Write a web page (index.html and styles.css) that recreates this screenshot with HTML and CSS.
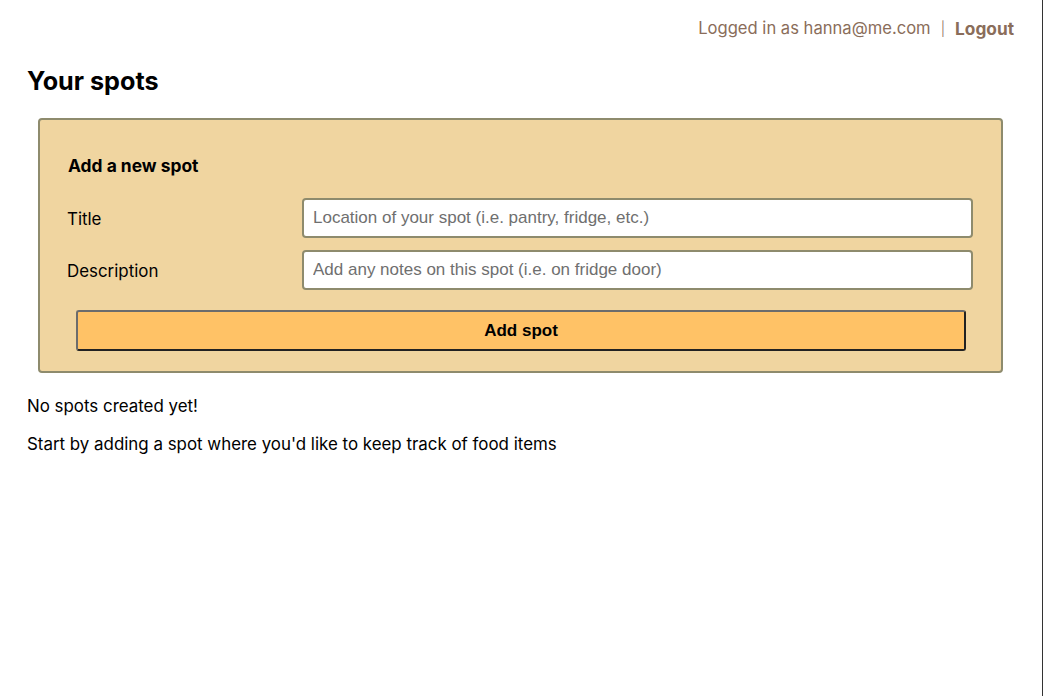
FILE: index.html
```html
<!DOCTYPE html>
<html lang="en">
<head>
<meta charset="utf-8">
<title>Your spots</title>
<link rel="stylesheet" href="styles.css">
</head>
<body>
<div class="page">
  <header class="topbar">
    <span class="user">Logged in as hanna@me.com</span>
    <span class="sep">|</span>
    <a class="logout" href="#">Logout</a>
  </header>
  <main class="content">
    <h1 class="title">Your spots</h1>
    <form class="card">
      <h2 class="card-title">Add a new spot</h2>
      <div class="row">
        <label class="label" for="t">Title</label>
        <input class="field" id="t" type="text" placeholder="Location of your spot (i.e. pantry, fridge, etc.)">
      </div>
      <div class="row">
        <label class="label" for="d">Description</label>
        <input class="field" id="d" type="text" placeholder="Add any notes on this spot (i.e. on fridge door)">
      </div>
      <button class="btn" type="button">Add spot</button>
    </form>
    <p class="msg">No spots created yet!</p>
    <p class="msg">Start by adding a spot where you'd like to keep track of food items</p>
  </main>
</div>
</body>
</html>
```
FILE: styles.css
```css
html, body {
  margin: 0;
  padding: 0;
  background: #fff;
}
body {
  font-family: Inter, "Noto Sans", sans-serif;
  font-size: 16.9px;
  color: #000;
}
.page {
  width: 1043px;
  min-height: 696px;
  border-right: 1px solid #333;
  box-sizing: border-box;
}
.topbar {
  display: flex;
  justify-content: flex-end;
  align-items: center;
  gap: 10px;
  padding: 18px 28px 0 0;
  height: 20px;
  color: #8a6d5a;
  font-size: 16.6px;
}
.sep {
  font-size: 14px;
  font-weight: 300;
}
.logout {
  color: #8a6d5a;
  font-weight: 700;
  font-size: 17.3px;
  text-decoration: none;
}
.content {
  padding: 0 28px 0 27px;
}
.title {
  margin: 29px 0 22px;
  font-size: 25.2px;
  font-weight: 700;
  line-height: 29px;
}
.card {
  margin: 0 11px;
  background: #f0d5a0;
  border: 2px solid #8e8b6d;
  border-radius: 4px;
  padding: 36px 28px 20px 27px;
  display: flex;
  flex-direction: column;
}
.card-title {
  margin: 0 0 23px 1px;
  font-size: 17.4px;
  font-weight: 700;
  line-height: 19px;
}
.row {
  display: flex;
  align-items: center;
  margin-bottom: 12px;
}
.label {
  width: 235px;
  padding-top: 1px;
  box-sizing: border-box;
  flex: none;
}
.field {
  flex: 1;
  height: 40px;
  box-sizing: border-box;
  border: 2px solid #8e8b6d;
  border-radius: 4px;
  background: #fff;
  padding: 0 9px;
  font-family: "Liberation Sans", Arial, sans-serif;
  font-size: 17px;
  color: #333;
}
.field::placeholder {
  color: #6f6f6f;
}
.btn {
  margin: 8px 7px 0 9px;
  height: 41px;
  background: #ffc266;
  border: 2px solid;
  border-color: #6c6c6c #222 #222 #6c6c6c;
  border-radius: 3px;
  font-family: "Liberation Sans", Arial, sans-serif;
  font-size: 17px;
  font-weight: 700;
  color: #000;
}
.msg {
  margin: 24px 0 0;
  line-height: 19px;
}
.msg + .msg {
  margin-top: 19px;
}
```
